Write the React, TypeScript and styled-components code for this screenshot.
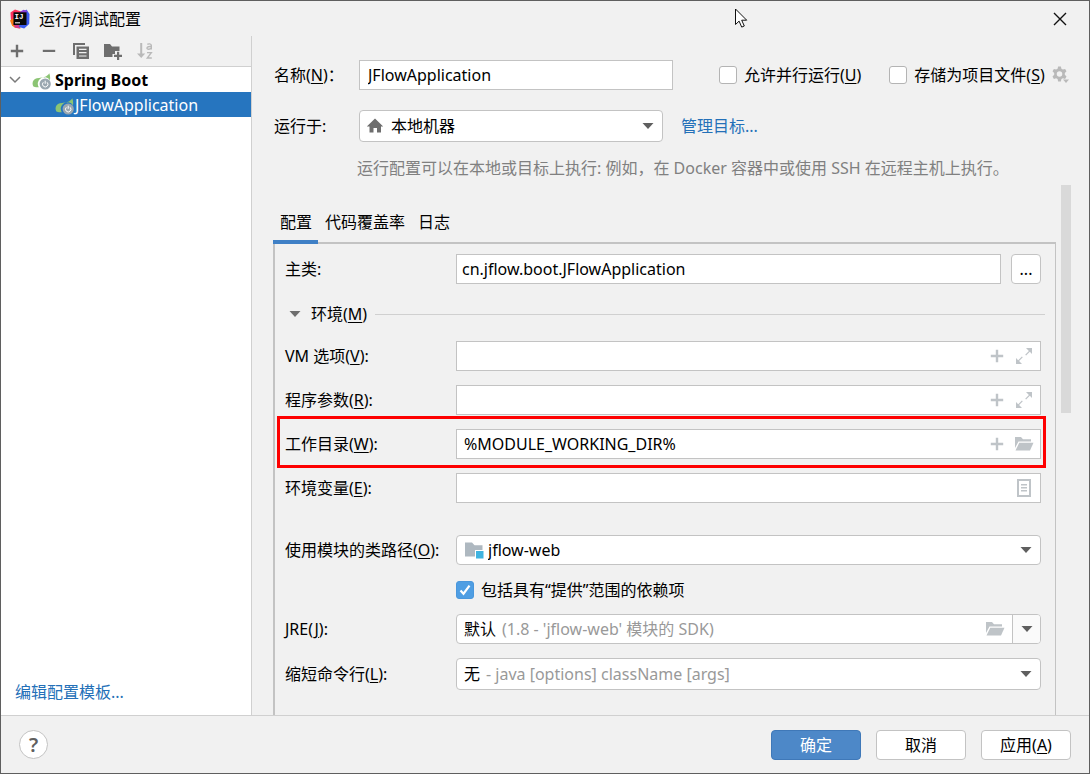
import React from "react";
import styled, { createGlobalStyle, css } from "styled-components";

const color = {
  window: "#f1f1f1",
  frame: "#5f5f5f",
  line: "#d0d0d0",
  border: "#c3c3c3",
  icon: "#6e6e6e",
  faint: "#bfc4c8",
  link: "#2470b8",
  selection: "#2675bf",
  primary: "#4d88c8",
};

const GlobalStyle = createGlobalStyle`
  *, *::before, *::after { box-sizing: border-box; }
  body {
    margin: 0;
    background: ${color.window};
    color: #000;
    font: 16px/20px "Noto Sans", "Noto Sans CJK SC", sans-serif;
  }
  button, input, select { font: inherit; color: inherit; }
  svg { display: block; flex: none; }
`;

const Dialog = styled.div`
  position: relative;
  display: flex;
  flex-direction: column;
  min-height: 100vh;
  border: 1px solid ${color.frame};
  background: ${color.window};
`;

const TitleBar = styled.header`
  display: flex;
  align-items: center;
  gap: 9px;
  height: 35px;
  padding: 0 12px 0 9px;
`;

const Title = styled.h1`
  flex: 1;
  margin: 0;
  font-size: 16px;
  font-weight: 400;
`;

const PlainButton = styled.button`
  display: flex;
  align-items: center;
  justify-content: center;
  padding: 0;
  border: 0;
  background: none;
`;

const CloseButton = styled(PlainButton)`
  width: 34px;
  height: 34px;
`;

const Pointer = styled.svg`
  position: absolute;
  left: 733px;
  top: 7px;
`;

const Body = styled.div`
  flex: 1;
  display: flex;
`;

const Sidebar = styled.aside`
  flex: none;
  display: flex;
  flex-direction: column;
  width: 251px;
  border-right: 1px solid ${color.line};
`;

const Toolbar = styled.div`
  display: flex;
  height: 31px;
  border-bottom: 1px solid ${color.line};
`;

const ToolButton = styled(PlainButton)`
  width: 32px;
`;

const Tree = styled.ul`
  flex: 1;
  margin: 0;
  padding: 0;
  list-style: none;
  background: #fff;
`;

const TreeRow = styled.li<{ $selected?: boolean; $level: number }>`
  display: flex;
  align-items: center;
  height: 25px;
  padding-left: ${(p) => (p.$level ? 54 : 5)}px;
  ${(p) =>
    p.$selected
      ? css`
          background: ${color.selection};
          color: #fff;
        `
      : css`
          gap: 3px;
          font-weight: 700;
        `}
`;

const FoldButton = styled(PlainButton)`
  width: 18px;
  margin-right: 5px;
`;

const Link = styled.a`
  color: ${color.link};
  text-decoration: none;
`;

const TreeFooter = styled.div`
  padding: 0 14px 13px;
  background: #fff;
`;

const Main = styled.main`
  flex: 1;
  min-width: 0;
  display: flex;
  flex-direction: column;
  padding: 24px 18px 0 21px;
`;

const HeadForm = styled.div`
  display: flex;
  flex-direction: column;
  gap: 20px;
  padding-bottom: 7px;
`;

const HeadRow = styled.div`
  display: flex;
  align-items: center;
`;

const HeadLabel = styled.label`
  flex: none;
  width: 86px;
  padding-left: 1px;
`;

const HeadHint = styled.p`
  margin: -4px 0 0 84px;
  color: #808080;
  white-space: nowrap;
`;

const Mnemonic = styled.u`
  text-underline-offset: 2px;
`;

const Field = styled.div`
  flex: 1;
  min-width: 0;
  display: flex;
  height: 30px;
  padding-right: 3px;
  border: 1px solid ${color.border};
  background: #fff;
`;

const NameField = styled(Field)`
  flex: 0 1 314px;
  margin-right: 46px;
`;

const TextInput = styled.input<{ $indent?: number }>`
  flex: 1;
  min-width: 0;
  padding: 0 0 0 ${(p) => p.$indent ?? 7}px;
  border: 0;
  outline: 0;
  background: transparent;
`;

const FieldButton = styled(PlainButton)`
  width: 27px;
`;

const Checks = styled.div`
  flex: 1;
  display: flex;
  align-items: center;
  gap: 28px;
`;

const CheckLabel = styled.label`
  display: flex;
  align-items: center;
  gap: 7px;
  height: 21px;
  white-space: nowrap;
`;

const CheckFrame = styled.span`
  display: grid;
  place-items: center;
  > * { grid-area: 1 / 1; }
  svg { visibility: hidden; pointer-events: none; }
  input:checked + svg { visibility: visible; }
`;

const CheckInput = styled.input`
  appearance: none;
  width: 18px;
  height: 18px;
  margin: 0;
  border: 1px solid #b4b4b4;
  border-radius: 3px;
  background: #fff;
  &:checked {
    border-color: #4a97dc;
    background: #4f9ee3;
  }
`;

const GearButton = styled(PlainButton)`
  margin-left: -22px;
`;

const ComboFrame = styled.div<{ $tall?: boolean }>`
  flex: 1;
  min-width: 0;
  display: grid;
  height: ${(p) => (p.$tall ? 32 : 30)}px;
  border: 1px solid ${color.border};
  border-radius: 4px;
  background: #fff;
  overflow: hidden;
  > * { grid-area: 1 / 1; }
`;

const TargetCombo = styled.div`
  flex: 0 1 304px;
  display: flex;
  margin-right: 18px;
`;

const Select = styled.select<{ $icon?: boolean }>`
  appearance: none;
  width: 100%;
  min-width: 0;
  padding: 0 0 0 ${(p) => (p.$icon ? 31 : 7)}px;
  border: 0;
  outline: 0;
  background: transparent;
`;

const ComboIcon = styled.span`
  align-self: center;
  justify-self: start;
  padding-left: 6px;
  pointer-events: none;
`;

const ComboHint = styled.span<{ $chars: number }>`
  align-self: center;
  padding-left: calc(${(p) => p.$chars}em + 13px);
  color: #999;
  white-space: nowrap;
  pointer-events: none;
`;

const ComboEnd = styled.span`
  justify-self: end;
  display: flex;
  pointer-events: none;
`;

const ArrowBox = styled.span<{ $split?: boolean }>`
  display: grid;
  place-items: center;
  width: 28px;
  ${(p) =>
    p.$split &&
    css`
      border-left: 1px solid ${color.border};
      background: #fafafa;
    `}
`;

const BrowseBox = styled.span`
  display: grid;
  place-items: center;
  width: 34px;
`;

const ScrollArea = styled.div`
  flex: 1;
  display: flex;
  gap: 5px;
`;

const ScrollContent = styled.div`
  flex: 1;
  min-width: 0;
  display: flex;
  flex-direction: column;
`;

const ScrollThumb = styled.div`
  width: 10px;
  height: 228px;
  background: #d9d9d9;
`;

const TabList = styled.div`
  display: flex;
  padding-top: 24px;
`;

const Tab = styled.button<{ $active?: boolean }>`
  position: relative;
  height: 33px;
  padding: 0 6px 7px 7px;
  border: 0;
  background: none;
  ${(p) =>
    p.$active &&
    css`
      &::after {
        content: "";
        position: absolute;
        inset: auto 0 -2px 0;
        height: 4px;
        background: #3f80c6;
      }
    `}
`;

const Panel = styled.section`
  flex: 1;
  display: flex;
  flex-direction: column;
  gap: 32px;
  padding: 10px 14px 24px 10px;
  border: solid ${color.border};
  border-width: 2px 1px 0 2px;
`;

const Group = styled.div`
  display: flex;
  flex-direction: column;
  gap: 14px;
`;

const Row = styled.div`
  position: relative;
  display: flex;
  align-items: center;
`;

const RowLabel = styled.label`
  flex: none;
  width: 171px;
  white-space: nowrap;
`;

const Indented = styled.div`
  padding-left: 171px;
`;

const Highlight = styled.div`
  position: absolute;
  inset: -13px -5px -9px -8px;
  border: 3px solid #fe0000;
  pointer-events: none;
`;

const SectionHead = styled.div`
  display: flex;
  align-items: center;
  gap: 8px;
  height: 29px;
  margin-right: -4px;
  padding-top: 3px;
  &::after {
    content: "";
    flex: 1;
    height: 1px;
    background: ${color.line};
  }
`;

const SectionButton = styled(PlainButton)`
  gap: 10px;
  padding-left: 4px;
`;

const PushButton = styled.button<{ $kind?: "primary" | "browse" }>`
  width: ${(p) => (p.$kind === "browse" ? 30 : 90)}px;
  height: 30px;
  margin-left: ${(p) => (p.$kind === "browse" ? 10 : 0)}px;
  padding: 0;
  border: 1px solid ${(p) => (p.$kind === "primary" ? "#3f78b8" : color.border)};
  border-radius: 4px;
  background: ${(p) => (p.$kind === "primary" ? color.primary : "#fff")};
  color: ${(p) => (p.$kind === "primary" ? "#fff" : "#000")};
`;

const Footer = styled.footer`
  display: flex;
  align-items: center;
  gap: 15px;
  height: 58px;
  padding: 0 18px;
  border-top: 1px solid ${color.line};
`;

const HelpButton = styled.button`
  width: 29px;
  height: 29px;
  margin-right: auto;
  padding: 0;
  border: 1px solid ${color.border};
  border-radius: 50%;
  background: #fff;
  color: #5f5f5f;
  font-size: 20px;
  font-weight: 600;
`;

const AppLogo = () => (
  <svg width="20" height="20" viewBox="0 0 20 20" aria-hidden="true">
    <path d="M.5 3.500 5 .5l6 2-2 9-8 .5z" fill="#fe315d" />
    <path d="M0 11.500 4 9l6 5 .5 5.500-6-1-2.500-2z" fill="#f97a12" />
    <path d="M3 14h6l1 5.500-5-.8z" fill="#d43a8c" />
    <path d="M12 4 16.500.5l3 4.500-.3 10-5 4.500L9 18z" fill="#3b5bef" />
    <path d="M9 3.500 13.500.8l4 1.200-3 4z" fill="#8a3fd6" />
    <path d="M3.500 3.300h13v12.700h-13z" fill="#080808" />
    <text x="4.500" y="10" fontFamily="Liberation Mono" fontWeight="700" fontSize="7.500" fill="#fff">IJ</text>
    <path d="M5 13.200h5v1.200H5z" fill="#ddd" />
  </svg>
);

const SpringIcon = () => (
  <svg width="20" height="20" viewBox="0 0 20 20" aria-hidden="true">
    <path
      d="M17.300 3.200c1 2.500 1 5 .6 7A6.500 6.500 0 0 0 6.800 17.200c-2 .2-4.300.1-5.600-.9C-.4 12.900 1 9.500 4.800 8.300c3.200-1 6.200-.5 9-1.900 1.500-.7 2.700-1.800 3.500-3.200z"
      fill="#8cc474"
    />
    <circle cx="13.200" cy="14" r="5.600" fill="#9aa7b0" />
    <path d="M11.300 12.300a2.700 2.700 0 1 0 3.800 0M13.200 10.700v3.100" fill="none" stroke="#fff" strokeWidth="1" />
  </svg>
);

const Plus = ({ tone, size = 14 }: { tone: string; size?: number }) => (
  <svg width={size} height={size} viewBox="0 0 14 14" aria-hidden="true">
    <path d="M5.800.8h2.400v5h5v2.400h-5v5H5.800v-5h-5V5.800h5z" fill={tone} />
  </svg>
);

const Minus = () => (
  <svg width="14" height="14" viewBox="0 0 14 14" aria-hidden="true">
    <path d="M.8 5.800h12.400v2.200H.8z" fill={color.icon} />
  </svg>
);

const CopyIcon = () => (
  <svg width="18" height="18" viewBox="0 0 18 18" aria-hidden="true">
    <path d="M1 1h12v2H3v10H1z" fill={color.icon} />
    <path d="M4.500 4.500H17V17H4.500z" fill={color.icon} />
    <path d="M7 6.800h7.500v1.200H7zm0 3.300h7.500v1.200H7zm0 3.300h7.500v1.200H7z" fill={color.window} />
  </svg>
);

const NewFolderIcon = () => (
  <svg width="20" height="18" viewBox="0 0 20 18" aria-hidden="true">
    <path d="M1 2h6l2 2.500h7.500V9H12v3H9.500v3H1z" fill={color.icon} />
    <path d="M14 9.800h2.200v3H19v2.200h-2.800v3H14v-3h-3v-2.200h3z" fill={color.icon} />
  </svg>
);

const SortIcon = () => (
  <svg width="18" height="18" viewBox="0 0 18 18" aria-hidden="true">
    <path d="M4.200 1h2v10.500h3L5.200 16 1 11.500h3.200z" fill="#b9b9b9" />
    <g fill="none" stroke="#b9b9b9" strokeWidth="1.400">
      <path d="M11.300 2.400c1-.8 4-.9 4 1V7.500M15.300 4.600c-2-.2-4.300 0-4.300 1.500 0 1.700 3.200 1.400 4.300-.3" />
      <path d="M11 10.600h4.300L11.300 16h4.500" />
    </g>
  </svg>
);

const Chevron = () => (
  <svg width="12" height="8" viewBox="0 0 12 8" aria-hidden="true">
    <path d="m1 1 5 5 5-5" fill="none" stroke="#7a7a7a" strokeWidth="1.500" />
  </svg>
);

const Triangle = ({ tone = "#5f5f5f" }: { tone?: string }) => (
  <svg width="12" height="8" viewBox="0 0 12 8" aria-hidden="true">
    <path d="M.5 1h11L6 7z" fill={tone} />
  </svg>
);

const HomeIcon = () => (
  <svg width="18" height="18" viewBox="0 0 18 18" aria-hidden="true">
    <path d="M9 1.500 17.200 9.500H15V15.500h-4V11H7.500v4.500H3.500V9.500H.8z" fill={color.icon} />
  </svg>
);

const ExpandIcon = () => (
  <svg width="18" height="18" viewBox="0 0 18 18" aria-hidden="true">
    <path d="M11 1h6v6l-2.200-2.200-3.700 3.800-.9-.9 3.700-3.800zM1 11l2.200 2.200 3.700-3.800.9.9-3.700 3.800L7 17H1z" fill={color.faint} />
  </svg>
);

const FolderOpenIcon = () => (
  <svg width="20" height="16" viewBox="0 0 20 16" aria-hidden="true">
    <path d="M1 1h6l2 2.200h8V5.500H4.500L1 12z" fill={color.faint} />
    <path d="M5.200 6.700H19.500L16 14.500H1.500z" fill={color.faint} />
  </svg>
);

const DocIcon = () => (
  <svg width="16" height="18" viewBox="0 0 16 18" aria-hidden="true">
    <path d="M2 1h12v16H2z" fill="#fff" stroke={color.faint} strokeWidth="2" />
    <path d="M5 5h6v1.400H5zm0 3h6v1.400H5zm0 3h6v1.400H5z" fill={color.faint} />
  </svg>
);

const ModuleIcon = () => (
  <svg width="22" height="20" viewBox="0 0 22 20" aria-hidden="true">
    <path d="M2 2.500h7l2.500 2.700H19.500V10H12v6.500H2z" fill="#aeb8c0" />
    <path d="M13 11h7.500v7.500H13z" fill="#3fb3e0" />
  </svg>
);

const GearIcon = () => (
  <svg width="20" height="20" viewBox="0 0 20 20" aria-hidden="true">
    <path
      d="M7.100 1.500h2.800l.5 2.200 1.500.9 2.200-.7 1.400 2.400L13.800 8v1.800l1.700 1.600-1.400 2.500-2.200-.7-1.500.9-.5 2.300H7.100l-.5-2.300-1.500-.9-2.200.7-1.400-2.500 1.700-1.600V8L1.500 6.300l1.400-2.400 2.200.7 1.500-.9zM8.500 6.200a2.700 2.700 0 1 0 0 5.500 2.700 2.700 0 0 0 0-5.500z"
      fill="#b9b9b9"
      fillRule="evenodd"
    />
    <path d="M12 14.500h6L15 18z" fill="#b9b9b9" />
  </svg>
);

const CheckMark = () => (
  <svg width="14" height="14" viewBox="0 0 14 14" aria-hidden="true">
    <path d="m2.500 7.500 3 3.200 6-8" fill="none" stroke="#fff" strokeWidth="2.200" />
  </svg>
);

const CloseIcon = () => (
  <svg width="14" height="14" viewBox="0 0 14 14" aria-hidden="true">
    <path d="m1 1 12 12M13 1 1 13" stroke="#111" strokeWidth="1.400" />
  </svg>
);

function Check({ children, checked }: { children: React.ReactNode; checked?: boolean }) {
  return (
    <CheckLabel>
      <CheckFrame>
        <CheckInput type="checkbox" defaultChecked={checked} />
        <CheckMark />
      </CheckFrame>
      <span>{children}</span>
    </CheckLabel>
  );
}

type ComboProps = {
  id: string;
  value: string;
  hint?: string;
  icon?: React.ReactNode;
  tall?: boolean;
  browse?: boolean;
};

function Combo({ id, value, hint, icon, tall, browse }: ComboProps) {
  return (
    <ComboFrame $tall={tall}>
      <Select id={id} $icon={!!icon}>
        <option>{value}</option>
      </Select>
      {icon && <ComboIcon>{icon}</ComboIcon>}
      {hint && <ComboHint $chars={value.length}>{hint}</ComboHint>}
      <ComboEnd>
        {browse && (
          <BrowseBox>
            <FolderOpenIcon />
          </BrowseBox>
        )}
        <ArrowBox $split={browse}>
          <Triangle />
        </ArrowBox>
      </ComboEnd>
    </ComboFrame>
  );
}

type ParamRowProps = {
  id: string;
  label: string;
  mnemonic: string;
  value?: string;
  insert?: boolean;
  action: React.ReactNode;
  actionName: string;
  highlighted?: boolean;
};

function ParamRow({ id, label, mnemonic, value = "", insert, action, actionName, highlighted }: ParamRowProps) {
  return (
    <Row>
      <RowLabel htmlFor={id}>
        {label}(<Mnemonic>{mnemonic}</Mnemonic>):
      </RowLabel>
      <Field>
        <TextInput id={id} defaultValue={value} />
        {insert && (
          <FieldButton aria-label="插入宏">
            <Plus tone={color.faint} />
          </FieldButton>
        )}
        <FieldButton aria-label={actionName}>{action}</FieldButton>
      </Field>
      {highlighted && <Highlight />}
    </Row>
  );
}

export default function App() {
  return (
    <>
      <GlobalStyle />
      <Dialog>
        <TitleBar>
          <AppLogo />
          <Title>运行/调试配置</Title>
          <CloseButton aria-label="关闭">
            <CloseIcon />
          </CloseButton>
        </TitleBar>
        <Body>
          <Sidebar>
            <Toolbar>
              <ToolButton aria-label="添加"><Plus tone={color.icon} /></ToolButton>
              <ToolButton aria-label="移除"><Minus /></ToolButton>
              <ToolButton aria-label="复制"><CopyIcon /></ToolButton>
              <ToolButton aria-label="新建文件夹"><NewFolderIcon /></ToolButton>
              <ToolButton aria-label="排序"><SortIcon /></ToolButton>
            </Toolbar>
            <Tree>
              <TreeRow $level={0}>
                <FoldButton aria-label="折叠"><Chevron /></FoldButton>
                <SpringIcon />
                Spring Boot
              </TreeRow>
              <TreeRow $level={1} $selected>
                <SpringIcon />
                JFlowApplication
              </TreeRow>
            </Tree>
            <TreeFooter>
              <Link href="#templates">编辑配置模板...</Link>
            </TreeFooter>
          </Sidebar>
          <Main>
            <HeadForm>
              <HeadRow>
                <HeadLabel htmlFor="name">
                  名称(<Mnemonic>N</Mnemonic>)：
                </HeadLabel>
                <NameField>
                  <TextInput id="name" defaultValue="JFlowApplication" $indent={8} />
                </NameField>
                <Checks>
                  <Check>
                    允许并行运行(<Mnemonic>U</Mnemonic>)
                  </Check>
                  <Check>
                    存储为项目文件(<Mnemonic>S</Mnemonic>)
                  </Check>
                  <GearButton aria-label="存储设置"><GearIcon /></GearButton>
                </Checks>
              </HeadRow>
              <HeadRow>
                <HeadLabel htmlFor="target">运行于:</HeadLabel>
                <TargetCombo>
                  <Combo id="target" value="本地机器" icon={<HomeIcon />} tall />
                </TargetCombo>
                <Link href="#targets">管理目标...</Link>
              </HeadRow>
              <HeadHint>
                运行配置可以在本地或目标上执行: 例如，在 Docker 容器中或使用 SSH 在远程主机上执行。
              </HeadHint>
            </HeadForm>
            <ScrollArea>
              <ScrollContent>
                <TabList role="tablist">
                  <Tab role="tab" aria-selected="true" $active>配置</Tab>
                  <Tab role="tab" aria-selected="false">代码覆盖率</Tab>
                  <Tab role="tab" aria-selected="false">日志</Tab>
                </TabList>
                <Panel>
                  <Group>
                    <Row>
                      <RowLabel htmlFor="main-class">主类:</RowLabel>
                      <Field>
                        <TextInput id="main-class" defaultValue="cn.jflow.boot.JFlowApplication" $indent={5} />
                      </Field>
                      <PushButton $kind="browse">...</PushButton>
                    </Row>
                    <SectionHead>
                      <SectionButton aria-expanded="true">
                        <Triangle tone="#6e6e6e" />
                        <span>
                          环境(<Mnemonic>M</Mnemonic>)
                        </span>
                      </SectionButton>
                    </SectionHead>
                    <ParamRow id="vm" label="VM 选项" mnemonic="V" insert action={<ExpandIcon />} actionName="展开" />
                    <ParamRow id="args" label="程序参数" mnemonic="R" insert action={<ExpandIcon />} actionName="展开" />
                    <ParamRow
                      id="dir"
                      label="工作目录"
                      mnemonic="W"
                      value="%MODULE_WORKING_DIR%"
                      insert
                      action={<FolderOpenIcon />}
                      actionName="浏览"
                      highlighted
                    />
                    <ParamRow id="env" label="环境变量" mnemonic="E" action={<DocIcon />} actionName="编辑环境变量" />
                  </Group>
                  <Group>
                    <Row>
                      <RowLabel htmlFor="module">
                        使用模块的类路径(<Mnemonic>O</Mnemonic>):
                      </RowLabel>
                      <Combo id="module" value="jflow-web" icon={<ModuleIcon />} />
                    </Row>
                    <Indented>
                      <Check checked>包括具有“提供”范围的依赖项</Check>
                    </Indented>
                    <Row>
                      <RowLabel htmlFor="jre">
                        JRE(<Mnemonic>J</Mnemonic>):
                      </RowLabel>
                      <Combo id="jre" value="默认" hint="(1.8 - 'jflow-web' 模块的 SDK)" browse />
                    </Row>
                    <Row>
                      <RowLabel htmlFor="shorten">
                        缩短命令行(<Mnemonic>L</Mnemonic>):
                      </RowLabel>
                      <Combo id="shorten" value="无" hint="- java [options] className [args]" tall />
                    </Row>
                  </Group>
                </Panel>
              </ScrollContent>
              <ScrollThumb />
            </ScrollArea>
          </Main>
        </Body>
        <Footer>
          <HelpButton aria-label="帮助">?</HelpButton>
          <PushButton $kind="primary">确定</PushButton>
          <PushButton>取消</PushButton>
          <PushButton>
            应用(<Mnemonic>A</Mnemonic>)
          </PushButton>
        </Footer>
        <Pointer width="14" height="21" viewBox="0 0 14 21" aria-hidden="true">
          <path d="M1.500 1v15.500l3.600-3.400 2.600 6 2.600-1.100-2.600-5.800h5z" fill="#fff" stroke="#111" strokeWidth="1" />
        </Pointer>
      </Dialog>
    </>
  );
}
